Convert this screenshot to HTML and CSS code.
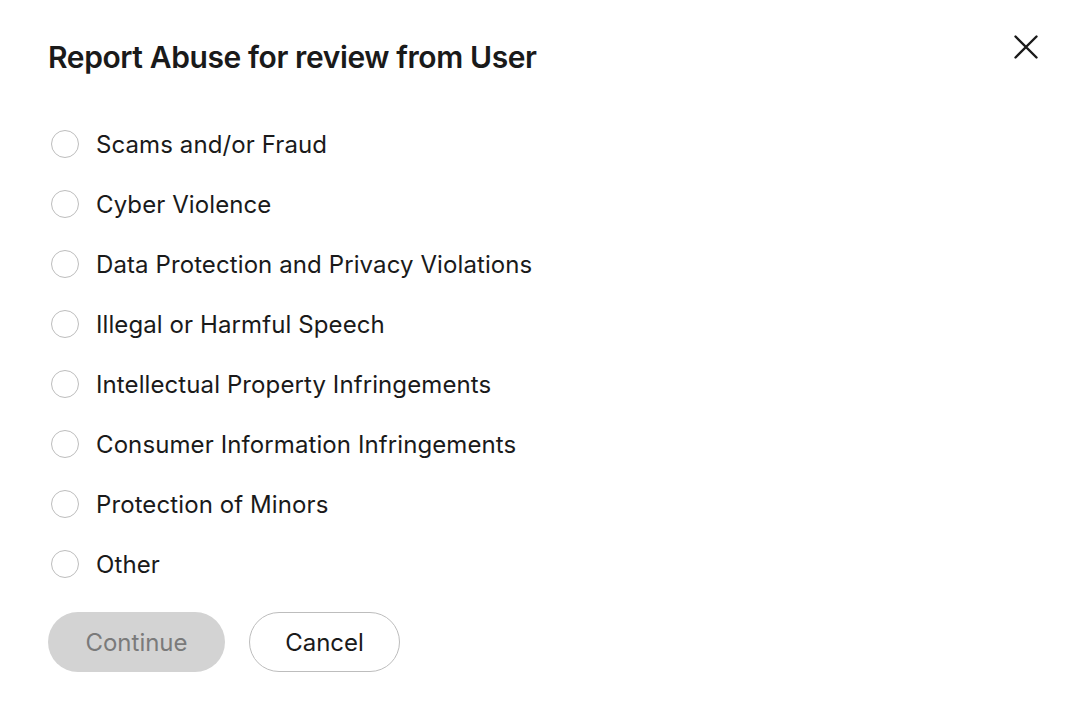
FILE: index.html
```html
<!DOCTYPE html>
<html>
<head>
<meta charset="utf-8">
<link rel="stylesheet" href="styles.css">
</head>
<body>
<div class="dialog">
  <div class="header">
    <h1 class="title">Report Abuse for review from User</h1>
    <button class="close" aria-label="Close">
      <svg width="24" height="24" viewBox="0 0 24 24"><path d="M1.5 1.5L22.5 22.5M22.5 1.5L1.5 22.5" stroke="#1a1a1a" stroke-width="2.4" stroke-linecap="round"/></svg>
    </button>
  </div>
  <div class="options">
    <label class="option"><span class="radio"></span><span class="label">Scams and/or Fraud</span></label>
    <label class="option"><span class="radio"></span><span class="label">Cyber Violence</span></label>
    <label class="option"><span class="radio"></span><span class="label">Data Protection and Privacy Violations</span></label>
    <label class="option"><span class="radio"></span><span class="label">Illegal or Harmful Speech</span></label>
    <label class="option"><span class="radio"></span><span class="label">Intellectual Property Infringements</span></label>
    <label class="option"><span class="radio"></span><span class="label">Consumer Information Infringements</span></label>
    <label class="option"><span class="radio"></span><span class="label">Protection of Minors</span></label>
    <label class="option"><span class="radio"></span><span class="label">Other</span></label>
  </div>
  <div class="actions">
    <button class="btn btn-primary" disabled>Continue</button>
    <button class="btn btn-secondary">Cancel</button>
  </div>
</div>
</body>
</html>
```
FILE: styles.css
```css
* { box-sizing: border-box; }
html, body { margin: 0; background: #fff; }
body { font-family: Inter, "Liberation Sans", sans-serif; color: #1a1a1a; }
.dialog { padding: 30px 40px 0 48px; }
.header { display: flex; justify-content: space-between; align-items: flex-start; }
.title { margin: 8px 0 0 0; font-size: 30px; font-weight: 600; line-height: 38px; letter-spacing: -0.4px; }
.close { background: none; border: 0; padding: 0; margin: 5px 0 0 0; width: 24px; height: 24px; cursor: pointer; }
.options { display: flex; flex-direction: column; margin-top: 38px; }
.option { display: flex; align-items: center; height: 60px; gap: 17px; cursor: pointer; }
.radio { width: 28px; height: 28px; border: 1.5px solid #bdbdbd; border-radius: 50%; margin-left: 3px; flex: none; }
.label { font-size: 24px; font-weight: 400; letter-spacing: 0.1px; }
.actions { display: flex; gap: 24px; margin-top: 18px; }
.btn { height: 60px; border-radius: 30px; font-family: inherit; font-size: 24px; padding: 0; }
.btn-primary { background: #d3d3d3; color: #7a7a7a; border: 0; width: 177px; }
.btn-secondary { background: #fff; color: #1a1a1a; border: 1px solid #bdbdbd; width: 151px; }
```
